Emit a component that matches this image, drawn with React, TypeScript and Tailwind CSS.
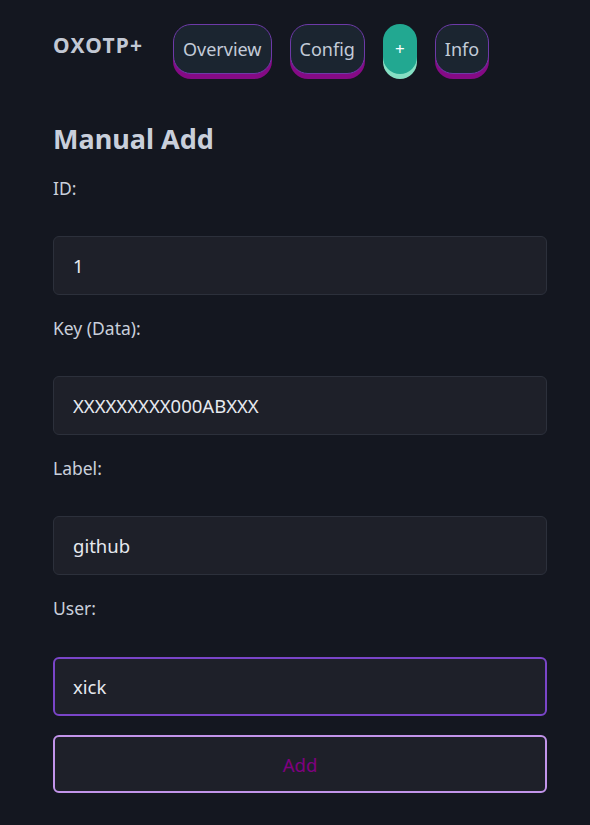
import { useEffect, useRef } from 'react'

const NAV = ['Overview', 'Config', '+', 'Info'] as const

const FIELDS = [
  { label: 'ID:', value: '1' },
  { label: 'Key (Data):', value: 'XXXXXXXXX000ABXXX' },
  { label: 'Label:', value: 'github' },
  { label: 'User:', value: 'xick', focused: true },
]

export default function App() {
  const userRef = useRef<HTMLInputElement>(null)

  useEffect(() => {
    const el = userRef.current
    if (!el) return
    el.focus()
    el.setSelectionRange(el.value.length, el.value.length)
  }, [])

  return (
    <div
      className="min-h-[825px] bg-[#141720] pl-[53px] pr-[43px] pt-6 pb-8 text-[#c9cfdb]"
      style={{ fontFamily: '"Noto Sans", "Open Sans", sans-serif' }}
    >
      {/* ── Nav ─────────────────────────────── */}
      <nav className="flex items-start">
        <span className="mt-[6px] mr-[29px] w-[91px] text-[21px] font-bold tracking-[1.2px] text-[#c2c8d4]">OXOTP+</span>
        <div className="flex items-start gap-[18px]">
          {NAV.map(item =>
            item === '+' ? (
              <button
                key={item}
                className="flex h-[50px] w-[34px] items-center justify-center rounded-full bg-[#22a891] text-[17px] text-white shadow-[0_5px_0_#86e0c4]"
              >
                +
              </button>
            ) : (
              <button
                key={item}
                className="h-[50px] rounded-[18px] border border-[#6d3aa8] bg-[#1b2530] px-[9px] text-[18px] text-[#c3cbd8] shadow-[0_5px_0_#850a85]"
              >
                {item}
              </button>
            ),
          )}
        </div>
      </nav>

      {/* ── Form ────────────────────────────── */}
      <h1 className="mt-[47px] text-[27px] leading-[36px] font-bold text-[#c9cfdb]">Manual Add</h1>

      <form className="mt-[19px]" onSubmit={e => e.preventDefault()}>
        {FIELDS.map(f => (
          <div key={f.label} className="mb-[21px]">
            <label className="block text-[17.5px] leading-[24px] text-[#c9cfdb]">{f.label}</label>
            <input
              ref={f.focused ? userRef : undefined}
              defaultValue={f.value}
              className={
                f.focused
                  ? 'mt-[37px] block h-[59px] w-full rounded-[6px] border-2 border-[#7a45c8] bg-[#1e2029] px-[18px] text-[18.5px] text-[#e6e9ef] caret-white outline-none'
                  : 'mt-[36px] block h-[59px] w-full rounded-[6px] border border-[#2c303b] bg-[#1e2029] px-[19px] text-[18.5px] text-[#e6e9ef] outline-none'
              }
            />
          </div>
        ))}

        <button
          type="submit"
          className="-mt-[2px] block h-[58px] w-full rounded-[6px] border-2 border-[#c294ea] bg-[#1e2029] pt-[2px] text-[18.5px] text-[#800080]"
        >
          Add
        </button>
      </form>
    </div>
  )
}
